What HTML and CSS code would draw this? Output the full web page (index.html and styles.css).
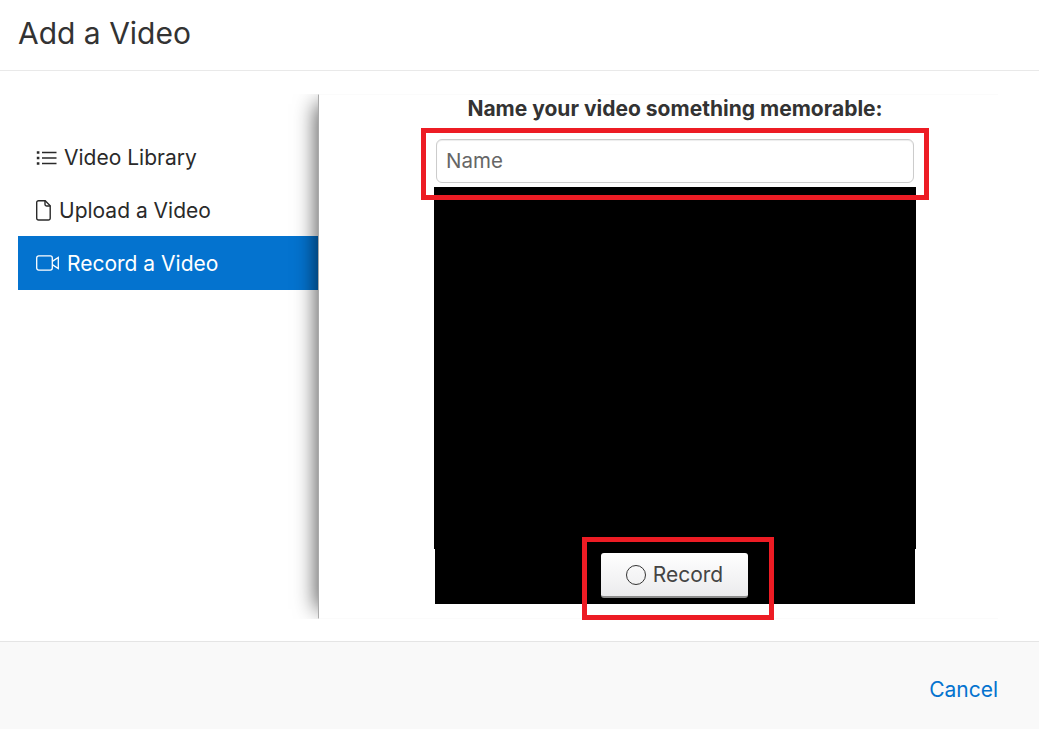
FILE: index.html
```html
<!DOCTYPE html>
<html lang="en">
<head>
<meta charset="utf-8">
<title>Add a Video</title>
<link rel="stylesheet" href="styles.css">
</head>
<body>
<div class="dialog">
  <header class="head"><h1 class="title">Add a Video</h1></header>
  <main class="body">
    <nav class="side">
      <a class="item">
        <svg class="ico" width="21" height="16" viewBox="0 0 21 16" fill="none" stroke="currentColor" stroke-width="1.5"><path d="M6 2.5h14.5M6 8h14.5M6 13.5h14.5"/><path stroke-width="2.6" d="M.8 2.5h2.6M.8 8h2.6M.8 13.5h2.6"/></svg>
        <span>Video Library</span>
      </a>
      <a class="item item-upload">
        <svg class="ico" width="15" height="21" viewBox="0 0 15 21" fill="none" stroke="currentColor" stroke-width="1.4"><path d="M2.5.8h6.7l5 5v12.4a1.8 1.8 0 0 1-1.8 1.8H2.5a1.8 1.8 0 0 1-1.8-1.8V2.6A1.8 1.8 0 0 1 2.5.8z"/><path d="M9 .8v3.4a1.8 1.8 0 0 0 1.8 1.8h3.4"/></svg>
        <span>Upload a Video</span>
      </a>
      <a class="item active">
        <svg class="ico" width="24" height="16" viewBox="0 0 24 16" fill="none" stroke="currentColor" stroke-width="1.3"><rect x=".7" y=".9" width="15.6" height="14.2" rx="2"/><path d="M16.3 6.4l6-3.9v11l-6-3.9"/></svg>
        <span>Record a Video</span>
      </a>
    </nav>
    <section class="panel">
      <div class="label">Name your video something memorable:</div>
      <input class="name" type="text" placeholder="Name">
      <div class="video"></div>
      <div class="controls">
        <button class="record" type="button"><span class="dot"></span>Record</button>
      </div>
    </section>
    <div class="mark mark-name"></div>
    <div class="mark mark-record"></div>
  </main>
  <footer class="foot"><a class="cancel">Cancel</a></footer>
</div>
</body>
</html>
```
FILE: styles.css
```css
* { box-sizing: border-box; }
html, body { margin: 0; height: 100%; }
body { font-family: Inter, "Liberation Sans", sans-serif; color: #333; background: #fff; overflow: hidden; }
.dialog { display: flex; flex-direction: column; height: 729px; }
.head { height: 71px; padding: 0 18px; border-bottom: 1px solid #e9e9e9; }
.title { margin: 0; font-size: 30px; line-height: 66px; font-weight: 400; color: #333; }
.body { position: relative; height: 570px; padding: 23px 41px 22px 18px; display: flex; }
.side { width: 300px; padding-top: 37px; flex: none; }
.item { display: flex; align-items: center; height: 53px; padding-left: 18px; font-size: 21px; color: #2a2a2a; }
.item .ico { margin-right: 7px; flex: none; }
.item-upload { height: 52px; padding-top: 1px; }
.item-upload .ico { margin-right: 8px; }
.item.active { height: 54px; background: #0473cf; color: #fff; }
.panel { width: 680px; height: 525px; border-left: 1px solid #aaa; border-top: 1px solid #fbfbfb; border-bottom: 1px solid #fbfbfb; box-shadow: -12px 0 20px -10px rgba(0,0,0,.65); clip-path: inset(0 0 0 -30px); background: #fff; display: flex; flex-direction: column; align-items: center; padding-left: 33px; }
.label { font-size: 21px; font-weight: 700; line-height: 28px; color: #333; margin-bottom: 16px; white-space: nowrap; }
.name { flex: none; display: block; width: 478px; height: 44px; border: 1px solid #ccc; border-radius: 6px; padding: 0 9px 1px; font: 20.5px Inter, "Liberation Sans", sans-serif; color: #333; box-shadow: inset 0 1px 1px rgba(0,0,0,.075); outline: none; margin-bottom: 4px; }
.name::placeholder { color: #666; opacity: 1; }
.video { flex: none; width: 482px; height: 362px; background: #000; }
.controls { flex: none; width: 480px; height: 55px; background: #000; display: flex; justify-content: center; padding-top: 4px; }
.record { width: 147px; height: 45px; margin-left: -1px; display: flex; align-items: center; justify-content: center; gap: 7px; padding: 0; border: 0; border-bottom: 2px solid #8d8d8d; border-radius: 3px; background: linear-gradient(#fff, #ebebed); font: 21px Inter, "Liberation Sans", sans-serif; color: #444; }
.dot { width: 20px; height: 20px; border: 1.5px solid #333; border-radius: 50%; }
.mark { position: absolute; border: 5px solid #ed1c24; pointer-events: none; }
.mark-name { left: 421px; top: 57px; width: 508px; height: 72px; }
.mark-record { left: 582px; top: 466px; width: 192px; height: 83px; }
.foot { flex: 1; border-top: 1px solid #e5e5e5; background: #f9f9f9; display: flex; justify-content: flex-end; align-items: center; padding: 7px 41px 0 0; }
.cancel { font-size: 21px; color: #0473cf; }
```
